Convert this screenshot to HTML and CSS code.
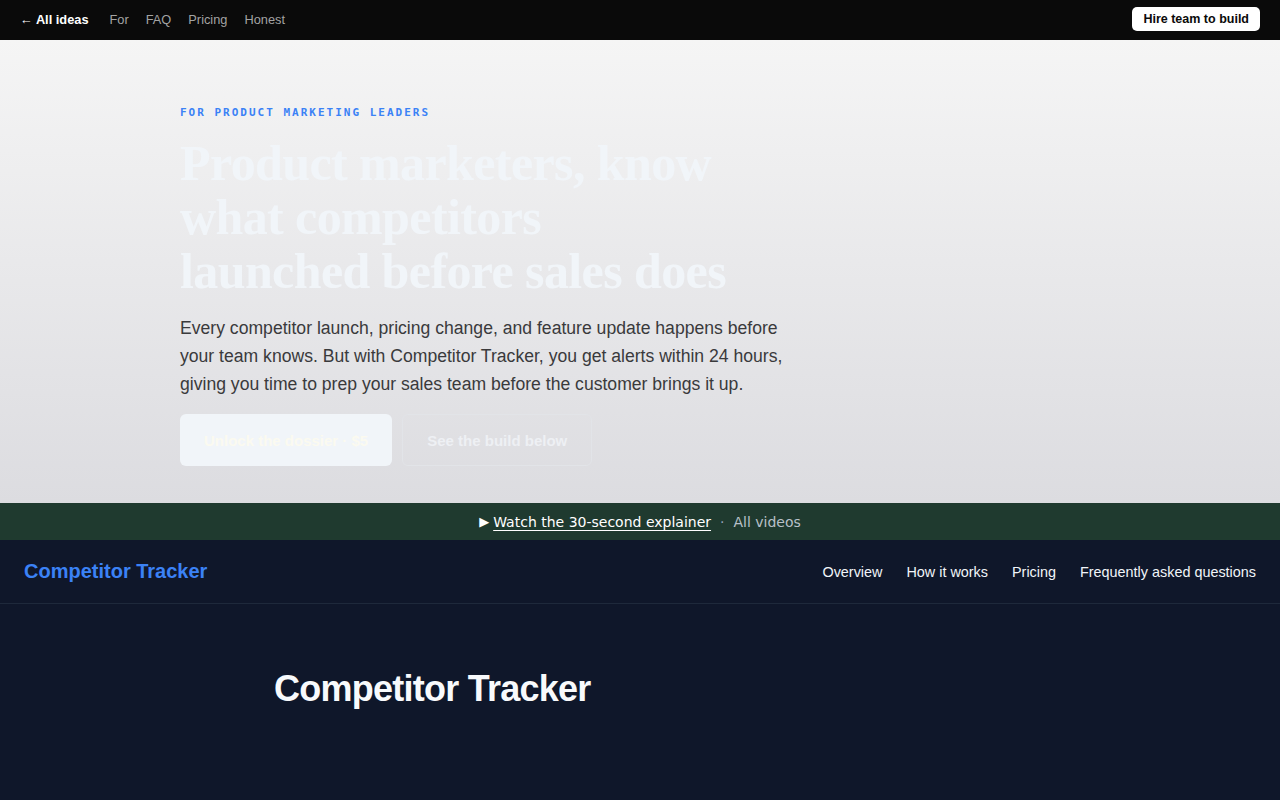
FILE: index.html
```html
<!DOCTYPE html>
<html>
  <head>
    <meta charset="UTF-8">
    <title>Competitor Tracker</title>
    <link rel="stylesheet" href="styles.css">
  </head>
  <body>
    <header class="topbar">
      <nav class="topbar-links">
        <a class="back" href="#">&larr; All ideas</a>
        <a href="#">For</a>
        <a href="#">FAQ</a>
        <a href="#">Pricing</a>
        <a href="#">Honest</a>
      </nav>
      <a class="hire" href="#">Hire team to build</a>
    </header>

    <section class="hero">
      <div class="hero-inner">
        <p class="eyebrow">FOR PRODUCT MARKETING LEADERS</p>
        <h1 class="headline">Product marketers, know<br>what competitors<br>launched before sales does</h1>
        <p class="lead">Every competitor launch, pricing change, and feature update happens before your team knows. But with Competitor Tracker, you get alerts within 24 hours, giving you time to prep your sales team before the customer brings it up.</p>
        <div class="actions">
          <a class="btn btn-primary" href="#">Unlock the dossier &middot; $5</a>
          <a class="btn btn-ghost" href="#">See the build below</a>
        </div>
      </div>
    </section>

    <div class="video-strip">
      <span class="play">&#9654;</span>
      <a class="watch" href="#">Watch the 30-second explainer</a>
      <span class="dot">&middot;</span>
      <a class="all" href="#">All videos</a>
    </div>

    <section class="app">
      <div class="app-nav">
        <a class="brand" href="#">Competitor Tracker</a>
        <nav class="app-links">
          <a href="#">Overview</a>
          <a href="#">How it works</a>
          <a href="#">Pricing</a>
          <a href="#">Frequently asked questions</a>
        </nav>
      </div>
      <div class="app-body">
        <h2 class="app-title">Competitor Tracker</h2>
      </div>
    </section>
  </body>
</html>
```

FILE: styles.css
```css
body{
  margin:0;
  font-family:"Liberation Sans", Arial, sans-serif;
  background-color:#0f172a;
}
a{
  text-decoration:none;
}

/* top bar */
.topbar{
  height:40px;
  box-sizing:border-box;
  padding:0 20px 2px 20px;
  background-color:#0a0a0a;
  display:flex;
  align-items:center;
  justify-content:space-between;
}
.topbar-links{
  display:flex;
  align-items:center;
  gap:17px;
  font-size:12.8px;
}
.topbar-links a{
  color:#a3a3a3;
}
.topbar-links .back{
  color:#ffffff;
  font-weight:bold;
  margin-right:4px;
}
.hire{
  background-color:#ffffff;
  color:#0a0a0a;
  font-size:12.5px;
  font-weight:bold;
  padding:5px 11px;
  border-radius:5px;
}

/* hero */
.hero{
  background:linear-gradient(180deg, #f5f5f5 0%, #dcdce0 100%);
  height:463px;
}
.hero-inner{
  padding:66px 0 0 180px;
}
.eyebrow{
  margin:0;
  font-family:"DejaVu Sans Mono", monospace;
  font-weight:bold;
  font-size:11px;
  letter-spacing:2px;
  color:#3b82f6;
}
.headline{
  margin:17px 0 0 0;
  font-family:"Liberation Serif", "Times New Roman", serif;
  font-size:50px;
  line-height:54px;
  letter-spacing:-0.6px;
  color:#f1f5f9;
}
.lead{
  margin:16px 0 0 0;
  width:615px;
  font-size:17.6px;
  line-height:28px;
  color:#3a3a3c;
}
.actions{
  display:flex;
  gap:10px;
  margin-top:16px;
}
.btn{
  display:flex;
  align-items:center;
  height:52px;
  box-sizing:border-box;
  padding:0 24px;
  font-size:15px;
  font-weight:bold;
  border-radius:6px;
}
.btn-primary{
  background-color:#f1f5f9;
  color:#fbfaf0;
}
.btn-ghost{
  border:1px solid #e2e4e8;
  color:#eef0f4;
}

/* video strip */
.video-strip{
  height:37px;
  background-color:#1f3a2f;
  display:flex;
  align-items:center;
  justify-content:center;
  gap:7px;
  font-family:"DejaVu Sans", sans-serif;
  font-size:14px;
}
.play{
  color:#ffffff;
  font-size:13px;
  margin-right:-3px;
}
.watch{
  color:#ffffff;
  text-decoration:underline;
  text-underline-offset:3px;
}
.dot{
  color:#94a3b8;
  margin:0 2px;
}
.all{
  color:#b8c0c8;
}

/* app preview */
.app-nav{
  height:64px;
  box-sizing:border-box;
  border-bottom:1px solid #1e293b;
  display:flex;
  align-items:center;
  justify-content:space-between;
  padding:0 24px;
}
.brand{
  color:#3b82f6;
  font-size:20px;
  font-weight:bold;
}
.app-links{
  display:flex;
  gap:24px;
  font-size:14.4px;
}
.app-links a{
  color:#f1f5f9;
}
.app-body{
  max-width:732px;
  margin:0 auto;
  padding-top:64px;
}
.app-title{
  margin:0;
  color:#f8fafc;
  font-size:36px;
  letter-spacing:-0.75px;
}
```
